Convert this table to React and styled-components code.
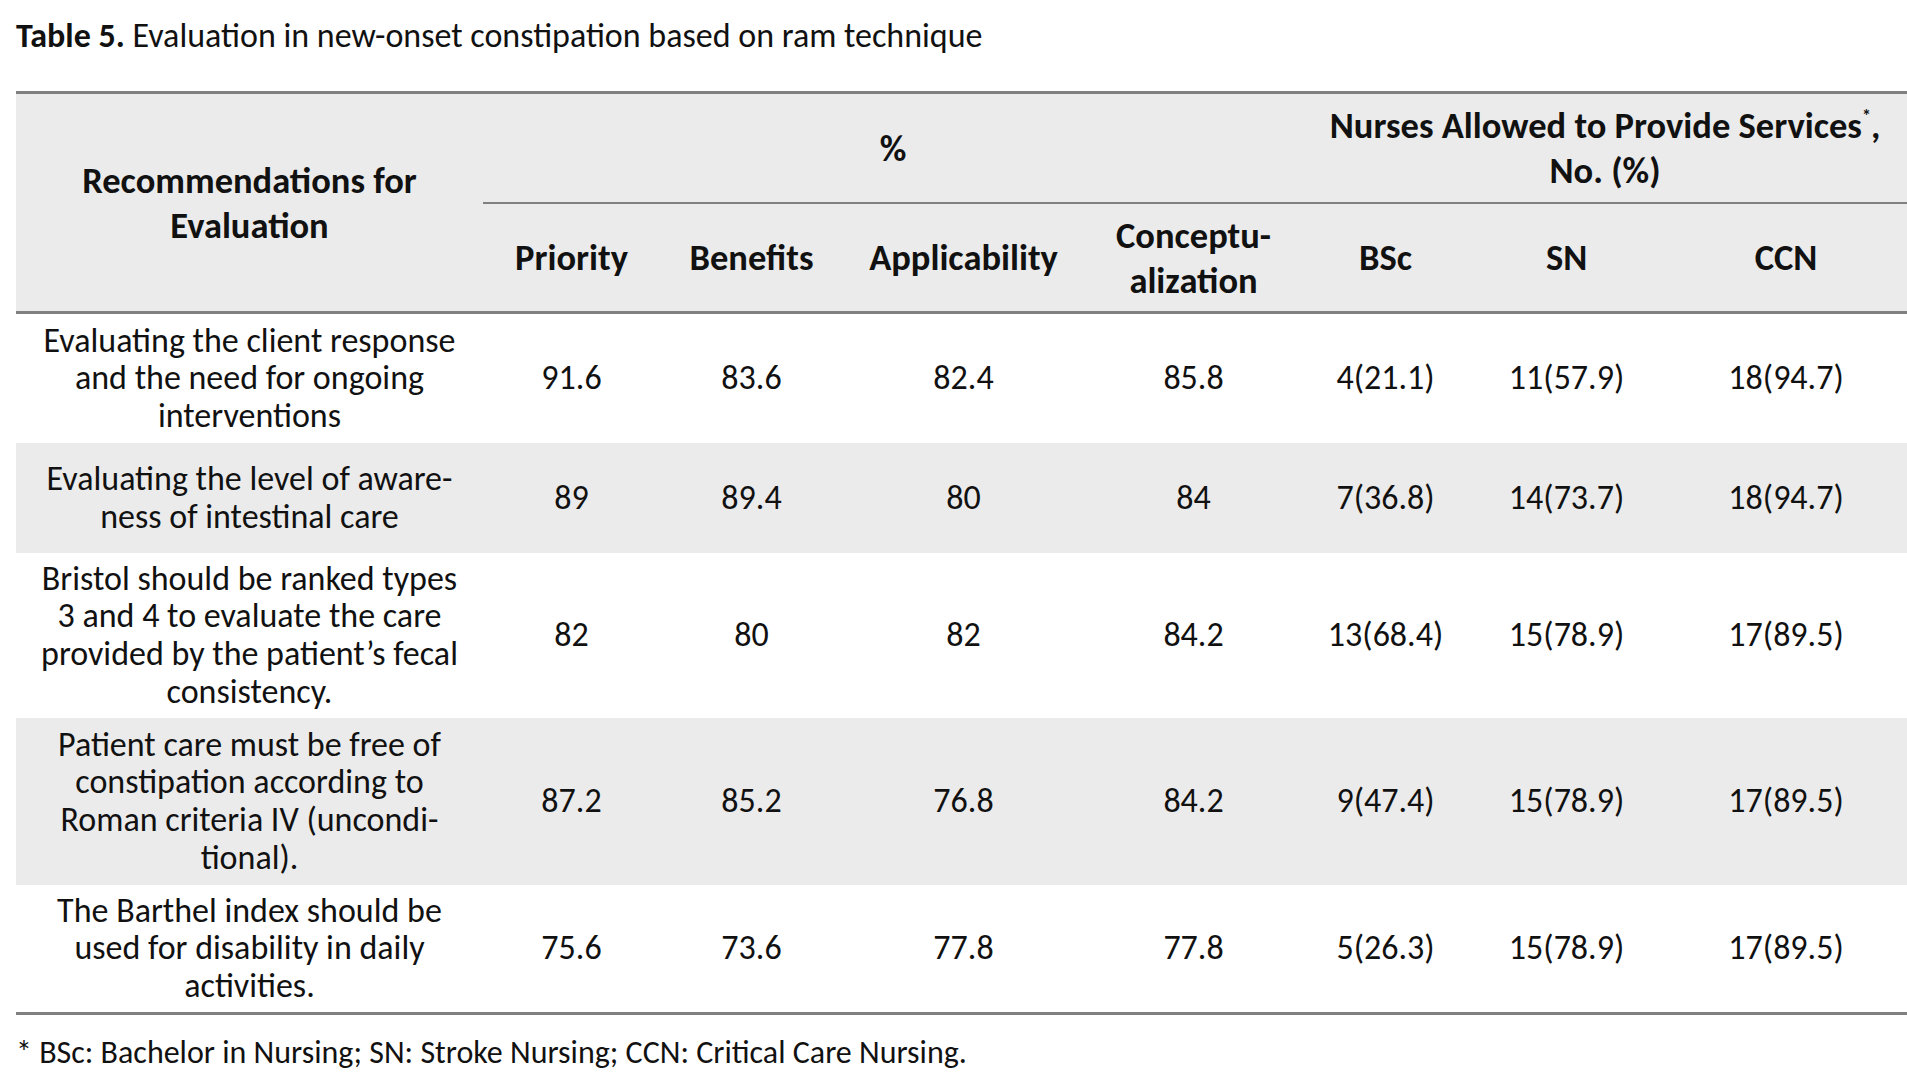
import styled, { createGlobalStyle } from "styled-components";

const GlobalStyle = createGlobalStyle`
  html, body {
    margin: 0;
    padding: 0;
    background: #ffffff;
  }
  body {
    font-family: "Carlito", "Lato", "Open Sans", sans-serif;
    color: #111111;
  }
`;

const Page = styled.div`
  padding: 17px 0 0 16px;
`;

const Caption = styled.p`
  margin: 0 0 36px;
  font-size: 34px;
  line-height: 38px;
  color: #111;

  strong {
    font-weight: 700;
  }
`;

const Table = styled.table`
  width: 1891px;
  border-collapse: collapse;
  table-layout: fixed;
  border-top: 3px solid #808080;
  border-bottom: 3px solid #808080;
  font-size: 34px;
  line-height: 37.7px;
`;

const Head = styled.thead`
  background: #ebebeb;
  border-bottom: 3px solid #808080;
`;

const Th = styled.th`
  font-size: 36.5px;
  line-height: 45px;
  font-weight: 700;
  text-align: center;
  vertical-align: middle;
  padding: 0 4px;
  height: ${(p) => p.$h || "auto"};
  border-bottom: ${(p) => (p.$rule ? "2px solid #808080" : "none")};

  sup {
    font-size: 18px;
    line-height: 0;
    vertical-align: 16px;
  }
`;

const Row = styled.tr`
  height: ${(p) => p.$h}px;
  background: ${(p) => (p.$shade ? "#ebebeb" : "#ffffff")};
`;

const Td = styled.td`
  text-align: center;
  vertical-align: middle;
  padding: 0 ${(p) => (p.$label ? 16 : 4)}px;
  font-weight: 400;
`;

const Note = styled.p`
  margin: 20px 0 0;
  font-size: 32px;
  line-height: 36px;
`;

const cols = [467, 177, 183, 241, 219, 165, 197, 242];

const rows = [
  {
    h: 130,
    label: "Evaluating the client response and the need for ongoing interventions",
    vals: ["91.6", "83.6", "82.4", "85.8", "4(21.1)", "11(57.9)", "18(94.7)"],
  },
  {
    h: 110,
    shade: true,
    label: "Evaluating the level of aware-ness of intestinal care",
    vals: ["89", "89.4", "80", "84", "7(36.8)", "14(73.7)", "18(94.7)"],
  },
  {
    h: 165,
    label:
      "Bristol should be ranked types 3 and 4 to evaluate the care provided by the patient’s fecal consistency.",
    vals: ["82", "80", "82", "84.2", "13(68.4)", "15(78.9)", "17(89.5)"],
  },
  {
    h: 167,
    shade: true,
    label:
      "Patient care must be free of constipation according to Roman criteria IV (uncondi-tional).",
    vals: ["87.2", "85.2", "76.8", "84.2", "9(47.4)", "15(78.9)", "17(89.5)"],
  },
  {
    h: 129,
    label: "The Barthel index should be used for disability in daily activities.",
    vals: ["75.6", "73.6", "77.8", "77.8", "5(26.3)", "15(78.9)", "17(89.5)"],
  },
];

export default function App() {
  return (
    <Page>
      <GlobalStyle />
      <Caption>
        <strong>Table 5.</strong> Evaluation in new-onset constipation based on
        ram technique
      </Caption>

      <Table>
        <colgroup>
          {cols.map((w, i) => (
            <col key={i} style={{ width: w }} />
          ))}
        </colgroup>
        <Head>
          <tr>
            <Th rowSpan={2}>
              Recommendations for
              <br />
              Evaluation
            </Th>
            <Th colSpan={4} $rule $h="108px">
              %
            </Th>
            <Th colSpan={3} $rule $h="108px">
              Nurses Allowed to Provide Services<sup>*</sup>,
              <br />
              No. (%)
            </Th>
          </tr>
          <tr>
            <Th $h="107px">Priority</Th>
            <Th>Benefits</Th>
            <Th>Applicability</Th>
            <Th>
              Conceptu-
              <br />
              alization
            </Th>
            <Th>BSc</Th>
            <Th>SN</Th>
            <Th>CCN</Th>
          </tr>
        </Head>
        <tbody>
          {rows.map((r, i) => (
            <Row key={i} $h={r.h} $shade={r.shade}>
              <Td $label>{r.label}</Td>
              {r.vals.map((v, j) => (
                <Td key={j}>{v}</Td>
              ))}
            </Row>
          ))}
        </tbody>
      </Table>

      <Note>* BSc: Bachelor in Nursing; SN: Stroke Nursing; CCN: Critical Care Nursing.</Note>
    </Page>
  );
}
